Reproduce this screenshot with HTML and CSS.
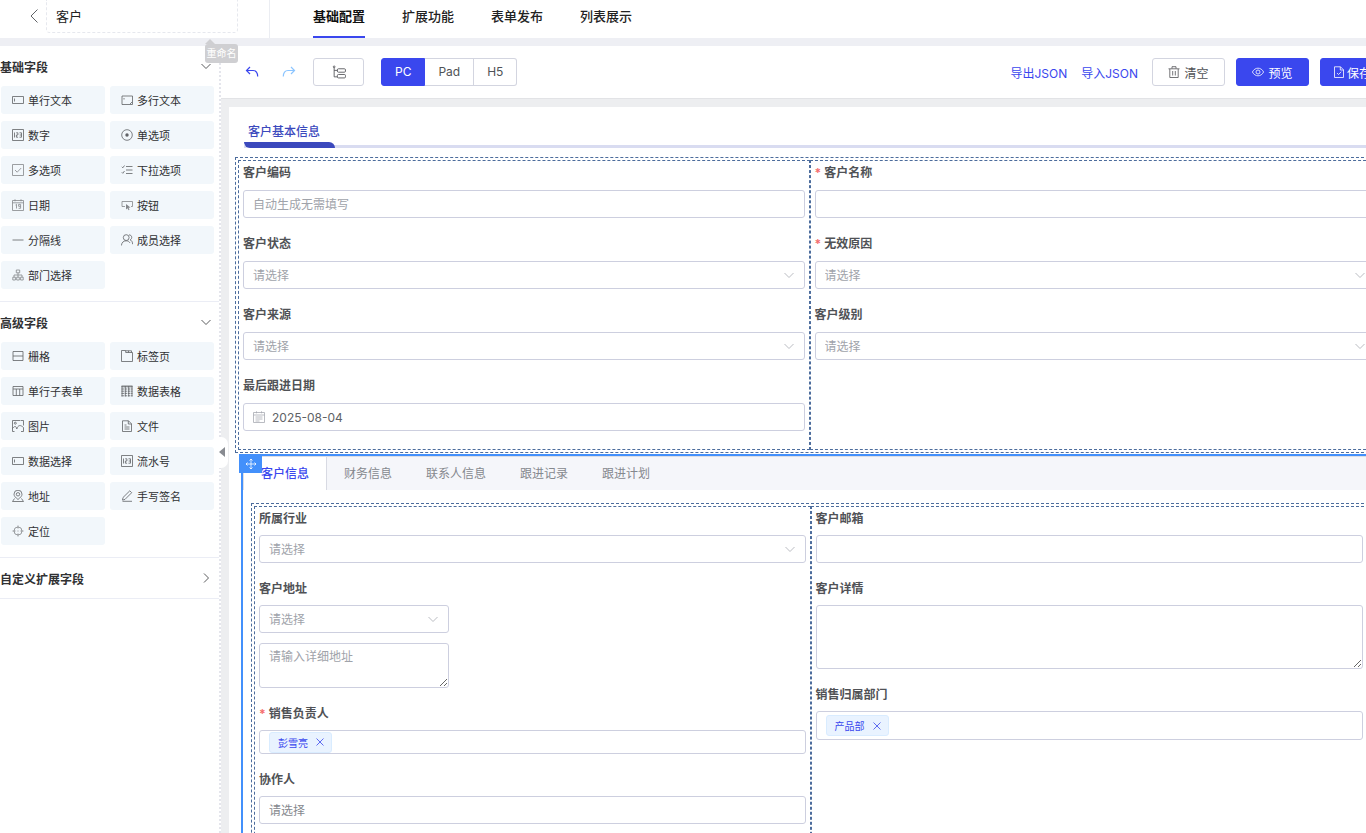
FILE: index.html
```html
<!DOCTYPE html>
<html lang="zh-CN">
<head>
    <meta charset="UTF-8">
    <meta name="viewport" content="width=device-width, initial-scale=1.0">
    <title>客户 - 基础配置</title>
    <link rel="stylesheet" href="styles.css">
</head>
<body>
    <svg class="sprite" aria-hidden="true">
        <symbol id="i-down" viewBox="0 0 12 12"><path d="M1.5 4L6 8.5L10.5 4"/></symbol>
        <symbol id="i-right" viewBox="0 0 12 12"><path d="M4 1.5L8.5 6L4 10.5"/></symbol>
        <symbol id="i-close" viewBox="0 0 12 12"><path d="M2.5 2.5L9.5 9.5M9.5 2.5L2.5 9.5"/></symbol>
        <symbol id="i-input" viewBox="0 0 12 12"><path d="M.5 2.5h11v7H.5zM2.5 4.5v3"/></symbol>
        <symbol id="i-num" viewBox="0 0 12 12"><path d="M.5.5h11v11H.5zM2.500 3.500v5M4.200 3.800h1.700v2.200H4.400v2.200h1.700M7.500 3.800h2v4.400h-2M7.700 6h1.800"/></symbol>
    </svg>
    <div class="app">
        <header class="header">
            <div class="header-left">
                <button class="back" aria-label="返回"><svg viewBox="0 0 12 16"><path d="M9.500 1.500L3 8L9.500 14.500"/></svg></button>
                <input class="form-name" type="text" value="客户" aria-label="表单名称">
                <span class="tooltip">重命名</span>
            </div>
            <nav class="nav">
                <a class="active" href="#">基础配置</a>
                <a href="#">扩展功能</a>
                <a href="#">表单发布</a>
                <a href="#">列表展示</a>
            </nav>
        </header>

        <div class="body">
            <aside class="sidebar">
                <section class="group">
                    <h2>基础字段 <svg class="icon"><use href="#i-down"/></svg></h2>
                    <div class="palette">
                        <button><svg class="icon"><use href="#i-input"/></svg>单行文本</button>
                        <button><svg class="icon" viewBox="0 0 12 12"><path d="M1 2h10.500v8.500H1zM3 4v1.500M9 10l2-2"/></svg>多行文本</button>
                        <button><svg class="icon"><use href="#i-num"/></svg>数字</button>
                        <button><svg class="icon" viewBox="0 0 12 12"><circle cx="6" cy="6" r="5.300"/><circle class="solid" cx="6" cy="6" r="1.700"/></svg>单选项</button>
                        <button><svg class="icon light" viewBox="0 0 12 12"><path d="M.5.5h11v11H.5zM3 6l2.200 2.200L9.200 4"/></svg>多选项</button>
                        <button><svg class="icon" viewBox="0 0 12 12"><path d="M.8 2.800l1 1L3.500 1.500M.8 8.300l1 1L3.500 7M5 2.500h6.500M5 6h6.500M5 9.500h6.500"/></svg>下拉选项</button>
                        <button><svg class="icon light" viewBox="0 0 12 12"><path d="M.5 1.500h11v10H.5zM.5 3.800h11M3 .3v2M9 .3v2M3.500 6l1-.7v4.200M8.500 7.300H6.600V5.400h2v3.900H6.600"/></svg>日期</button>
                        <button><svg class="icon light" viewBox="0 0 12 12"><path d="M4 7.500H1v-5h10.500v5H10"/><path class="solid" d="M5 5l4.500 3.500-2 .3 1 2-1 .4-.9-2L5 10.500z"/></svg>按钮</button>
                        <button><svg class="icon" viewBox="0 0 12 12"><path d="M.5 6h11"/></svg>分隔线</button>
                        <button><svg class="icon" viewBox="0 0 12 12"><circle cx="5.200" cy="3.600" r="2.900"/><path d="M.4 11.500c.3-3 2-4.700 4.800-4.700 1.800 0 3 .8 3.700 2M8 .9c2.900-.2 3.800 3.600 1.200 5 1.700.7 2.400 2.300 2.400 4.300"/></svg>成员选择</button>
                        <button><svg class="icon light" viewBox="0 0 12 12"><path d="M4.300 1h3.400v2.800H4.300zM.8 8.200h2.600V11H.8zM4.700 8.200h2.600V11H4.700zM8.600 8.200h2.600V11H8.600zM6 3.800v4.400M2 8.200V6h8v2.200"/></svg>部门选择</button>
                    </div>
                </section>
                <section class="group">
                    <h2>高级字段 <svg class="icon"><use href="#i-down"/></svg></h2>
                    <div class="palette">
                        <button><svg class="icon" viewBox="0 0 12 12"><path d="M1 1.500h10v9H1zM1 6h10"/></svg>栅格</button>
                        <button><svg class="icon" viewBox="0 0 12 12"><path d="M.5 11.500V.5h4.200v2h6.800v9zM4.700.8h5.800v1.700M7.500.8v1.700"/></svg>标签页</button>
                        <button><svg class="icon" viewBox="0 0 12 12"><path d="M1 1.500h10v9H1zM1 4h10M4.300 4v6.500M7.700 4v6.500"/></svg>单行子表单</button>
                        <button><svg class="icon" viewBox="0 0 12 12"><path d="M.5 1h11M.5 1.800h11"/><path stroke-dasharray="2.500 .700" d="M.5 4h11M.5 6.200h11M.5 8.400h11M.5 10.800h11"/><path d="M1 1v10.500M4.300 1v10.500M7.700 1v10.500M11 1v10.500"/></svg>数据表格</button>
                        <button><svg class="icon" viewBox="0 0 12 12"><path d="M8.500.5H.5v11h2M9 .5h2.500v5M.5 8.500C3 5.500 4 6 4.800 9c1.200-4 3.500-4.500 6.700-1.500v4H9"/><circle cx="3.300" cy="3.200" r="1"/></svg>图片</button>
                        <button><svg class="icon" viewBox="0 0 12 12"><path d="M1.500.8h6l3 3v7.700h-9zM7.300.8v3.200h3.200M3.500 5h2M3.500 7h5M3.500 9h5"/></svg>文件</button>
                        <button><svg class="icon"><use href="#i-input"/></svg>数据选择</button>
                        <button><svg class="icon"><use href="#i-num"/></svg>流水号</button>
                        <button><svg class="icon" viewBox="0 0 12 12"><path d="M6 9.500C3.500 7.500 2 6 2 4.200a4 4 0 0 1 8 0C10 6 8.500 7.500 6 9.500zM2.500 8.500L.5 11.500h11l-2-3"/><circle cx="6" cy="4.300" r="1.700"/></svg>地址</button>
                        <button><svg class="icon" viewBox="0 0 12 12"><path d="M2 7.500L8.800.8l1.900 1.900L4 9.400l-2.500.7zM1.500 11.300H11"/></svg>手写签名</button>
                        <button><svg class="icon light" viewBox="0 0 12 12"><circle cx="6" cy="6" r="4"/><path d="M6 .5v3M6 8.500v3M.5 6h3M8.500 6h3M5.500 6h1"/></svg>定位</button>
                    </div>
                </section>
                <section class="group closed">
                    <h2>自定义扩展字段 <svg class="icon"><use href="#i-right"/></svg></h2>
                </section>
                <button class="collapse" aria-label="收起"></button>
            </aside>

            <main class="main">
                <div class="toolbar">
                    <button class="tool undo" aria-label="撤销"><svg viewBox="0 0 14 12"><path d="M5 1L1.500 4.500L5 8M1.500 4.500H8c3 0 4.700 2.200 4.700 6"/></svg></button>
                    <button class="tool redo" aria-label="重做"><svg viewBox="0 0 14 12"><path d="M9 1l3.500 3.500L9 8M12.500 4.500H6c-3 0-4.700 2.200-4.700 6"/></svg></button>
                    <button class="btn tree" aria-label="大纲"><svg class="icon" viewBox="0 0 13 12"><path d="M2 2v8.500h3M2 4.500h3"/><circle cx="2" cy="1.200" r=".8"/><rect x="5" y="3" width="7.500" height="3.200" rx="1"/><rect x="5" y="8.300" width="7.500" height="3.200" rx="1"/></svg></button>
                    <div class="devices">
                        <label><input type="radio" name="device" checked><span>PC</span></label>
                        <label><input type="radio" name="device"><span>Pad</span></label>
                        <label><input type="radio" name="device"><span>H5</span></label>
                    </div>
                    <div class="actions">
                        <button class="link">导出JSON</button>
                        <button class="link">导入JSON</button>
                        <button class="btn"><svg class="icon" viewBox="0 0 12 12"><path d="M.5 2.800h11M4 2.500V.7h4v1.800M1.800 3v8.500h8.400V3M4.700 5v4.500M7.300 5v4.500"/></svg>清空</button>
                        <button class="btn primary"><svg class="icon" viewBox="0 0 12 12"><path d="M.4 6C3 .9 9 .9 11.600 6 9 11.100 3 11.100.4 6z"/><circle cx="6" cy="6" r="2"/></svg>预览</button>
                        <button class="btn primary save"><svg class="icon" viewBox="0 0 12 12"><path d="M1.500.8h6l3 3v7.700h-9zM7.300.8v3.200h3.200M4 7l1.500 1.500L8.300 5.800"/></svg>保存</button>
                    </div>
                </div>

                <div class="canvas">
                    <div class="title-bar"><h3>客户基本信息</h3></div>

                    <div class="grid">
                        <div class="col">
                            <div class="field">
                                <label for="code">客户编码</label>
                                <input id="code" type="text" placeholder="自动生成无需填写">
                            </div>
                            <div class="field">
                                <label for="status">客户状态</label>
                                <div class="select"><select id="status"><option>请选择</option></select><svg class="icon"><use href="#i-down"/></svg></div>
                            </div>
                            <div class="field">
                                <label for="source">客户来源</label>
                                <div class="select"><select id="source"><option>请选择</option></select><svg class="icon"><use href="#i-down"/></svg></div>
                            </div>
                            <div class="field">
                                <label for="date">最后跟进日期</label>
                                <div class="date">
                                    <svg class="icon" viewBox="0 0 12 12"><path d="M.5 1.500h11v10H.5zM.5 4h11M3.500.3v2M8.500.3v2M2.500 6h7M2.500 8h7M2.500 10h4"/></svg>
                                    <input id="date" type="text" value="2025-08-04">
                                </div>
                            </div>
                        </div>
                        <div class="col">
                            <div class="field required">
                                <label for="name">客户名称</label>
                                <input id="name" type="text">
                            </div>
                            <div class="field required">
                                <label for="reason">无效原因</label>
                                <div class="select"><select id="reason"><option>请选择</option></select><svg class="icon"><use href="#i-down"/></svg></div>
                            </div>
                            <div class="field">
                                <label for="level">客户级别</label>
                                <div class="select"><select id="level"><option>请选择</option></select><svg class="icon"><use href="#i-down"/></svg></div>
                            </div>
                        </div>
                    </div>

                    <div class="tabs">
                        <span class="drag"><svg class="icon" viewBox="0 0 12 12"><path d="M6 1v10M1 6h10M4.500 2.500L6 1l1.500 1.500M4.500 9.500L6 11l1.500-1.500M2.500 4.500L1 6l1.500 1.500M9.500 4.500L11 6 9.500 7.500"/></svg></span>
                        <div class="tab-head" role="tablist">
                            <button class="active" role="tab">客户信息</button>
                            <button role="tab">财务信息</button>
                            <button role="tab">联系人信息</button>
                            <button role="tab">跟进记录</button>
                            <button role="tab">跟进计划</button>
                        </div>
                        <div class="grid inner">
                            <div class="col">
                                <div class="field">
                                    <label for="industry">所属行业</label>
                                    <div class="select"><select id="industry"><option>请选择</option></select><svg class="icon"><use href="#i-down"/></svg></div>
                                </div>
                                <div class="field address">
                                    <label for="area">客户地址</label>
                                    <div class="select"><select id="area"><option>请选择</option></select><svg class="icon"><use href="#i-down"/></svg></div>
                                    <textarea placeholder="请输入详细地址" aria-label="详细地址"></textarea>
                                </div>
                                <div class="field required">
                                    <label for="owner">销售负责人</label>
                                    <div class="tag-box small">
                                        <span class="tag">彭雪亮<button id="owner" aria-label="移除彭雪亮"><svg class="icon"><use href="#i-close"/></svg></button></span>
                                    </div>
                                </div>
                                <div class="field">
                                    <label for="helper">协作人</label>
                                    <input id="helper" class="dark" type="text" placeholder="请选择">
                                </div>
                            </div>
                            <div class="col">
                                <div class="field">
                                    <label for="mail">客户邮箱</label>
                                    <input id="mail" type="text">
                                </div>
                                <div class="field">
                                    <label for="detail">客户详情</label>
                                    <textarea id="detail" class="tall"></textarea>
                                </div>
                                <div class="field">
                                    <label for="dept">销售归属部门</label>
                                    <div class="tag-box">
                                        <span class="tag">产品部<button id="dept" aria-label="移除产品部"><svg class="icon"><use href="#i-close"/></svg></button></span>
                                    </div>
                                </div>
                            </div>
                        </div>
                    </div>
                </div>
            </main>
        </div>
    </div>
</body>
</html>
```
FILE: styles.css
```css
* {
    box-sizing: border-box;
}

body {
    margin: 0;
    height: 100vh;
    overflow: hidden;
    background: #eeeff4;
    color: #303133;
    font-family: Inter, "Noto Sans CJK SC", sans-serif;
    font-size: 12px;
}

button, input, select, textarea {
    margin: 0;
    font: inherit;
    color: inherit;
}

button {
    padding: 0;
    border: none;
    background: none;
    cursor: pointer;
}

svg {
    fill: none;
    stroke: currentColor;
    stroke-width: 1;
}

.sprite {
    display: none;
}

.icon {
    flex: none;
    width: 12px;
    height: 12px;
    stroke-width: 0.8;
}

.light {
    opacity: 0.75;
}

.solid {
    fill: currentColor;
    stroke: none;
}

/* the designer is a little wider than the window */
.app {
    display: flex;
    flex-direction: column;
    gap: 8px;
    height: 100vh;
    margin-right: -32px;
}

/* header */
.header {
    display: flex;
    height: 38px;
    background: #fff;
    font-size: 13px;
}

.header-left {
    position: relative;
    display: flex;
    width: 270px;
    padding-left: 28px;
    border-right: 1px solid #ebedf2;
}

.back {
    width: 18px;
    height: 30px;
    text-align: left;
}

.back svg {
    width: 12px;
    height: 16px;
    vertical-align: middle;
    color: #606266;
}

.form-name {
    width: 192px;
    height: 33px;
    padding: 0 9px 2px;
    border: 1px dashed #e6e8ee;
    border-top: none;
    border-radius: 0 0 4px 4px;
    outline: none;
    color: #222;
}

.tooltip {
    position: absolute;
    top: 44px;
    left: 205px;
    z-index: 5;
    width: 33px;
    border-radius: 3px;
    background: #cfcfd2;
    color: #fff;
    font-size: 10px;
    line-height: 19px;
    text-align: center;
}

.tooltip::before {
    content: "";
    position: absolute;
    top: -5px;
    left: 0;
    border: 5px solid transparent;
    border-top: none;
    border-bottom-color: #cfcfd2;
}

.nav {
    display: flex;
    gap: 37px;
    padding-left: 43px;
}

.nav a {
    padding-bottom: 4px;
    border-bottom: 2px solid transparent;
    color: #222;
    font-weight: 500;
    line-height: 32px;
    text-decoration: none;
}

.nav .active {
    border-color: #3a47ee;
    color: #111;
    font-weight: 700;
}

.body {
    flex: 1;
    display: flex;
    min-height: 0;
}

/* field palette */
.sidebar {
    position: relative;
    flex: none;
    width: 221px;
    border-right: 2px dotted #e4e5ec;
    background: #fff;
}

.group {
    padding-bottom: 12px;
    border-bottom: 1px solid #ebedf5;
}

.group h2 {
    display: flex;
    align-items: center;
    justify-content: space-between;
    height: 40px;
    margin: 0;
    padding-right: 7px;
    font-size: 12px;
    font-weight: 700;
}

.group.closed {
    padding: 0;
}

.palette {
    display: grid;
    grid-template-columns: 104px 104px;
    gap: 7px 5px;
    padding-left: 1px;
}

.palette button {
    display: flex;
    align-items: center;
    gap: 4px;
    height: 28px;
    padding-left: 11px;
    border-radius: 3px;
    background: #f2f7fb;
    font-size: 11px;
}

.palette .icon {
    color: #606266;
}

.collapse {
    position: absolute;
    top: 391px;
    right: -9px;
    width: 11px;
    height: 31px;
    border-radius: 0 7px 7px 0;
    background: #fff;
}

.collapse::before {
    content: "";
    position: absolute;
    top: 10px;
    left: 2px;
    border: 5px solid transparent;
    border-left: none;
    border-right: 6px solid #888b91;
}

/* toolbar */
.main {
    flex: 1;
    display: flex;
    flex-direction: column;
    min-width: 0;
    background: #edeef0;
}

.toolbar {
    flex: none;
    display: flex;
    align-items: center;
    height: 53px;
    padding: 0 14px 0 24px;
    border-bottom: 1px solid #e2e3e6;
    background: #fff;
}

.tool {
    width: 14px;
    height: 14px;
    color: #3a47ee;
}

.tool svg {
    display: block;
    width: 14px;
    height: 12px;
    stroke-width: 1.2;
}

.redo {
    margin: 0 17px 0 23px;
    color: #8cc5ff;
}

.btn {
    display: flex;
    align-items: center;
    justify-content: center;
    gap: 4px;
    width: 73px;
    height: 28px;
    border: 1px solid #d3d5e0;
    border-radius: 3px;
    background: #fff;
    color: #505256;
}

.tree {
    width: 51px;
}

.tree .icon {
    width: 14px;
    height: 14px;
}

.primary {
    border-color: #3a47ee;
    background: #3a47ee;
    color: #fff;
}

.save {
    width: 64px;
    gap: 2px;
}

.devices {
    display: flex;
    margin-left: 17px;
}

.devices label {
    position: relative;
}

.devices input {
    position: absolute;
    opacity: 0;
}

.devices span {
    display: block;
    padding: 0 13px;
    border: 1px solid #d3d5e0;
    border-left: none;
    background: #fff;
    line-height: 26px;
    color: #505256;
}

.devices label:first-child span {
    border-left: 1px solid #d3d5e0;
    border-radius: 3px 0 0 3px;
}

.devices label:last-child span {
    border-radius: 0 3px 3px 0;
}

.devices input:checked + span {
    border-color: #3a47ee;
    background: #3a47ee;
    color: #fff;
}

.actions {
    display: flex;
    align-items: center;
    gap: 11px;
    margin-left: auto;
}

.link {
    margin-right: 3px;
    color: #3a47ee;
}

/* canvas */
.canvas {
    flex: 1;
    margin: 8px 8px 0;
    padding: 15px 6px 0;
    overflow: hidden;
    background: #fff;
}

.title-bar {
    margin: 0 0 9px 9px;
    border-bottom: 3px solid #d9dcf1;
}

.title-bar h3 {
    width: 91px;
    margin: 0 0 -3px;
    color: #3b49bd;
    font-size: 12px;
    font-weight: 500;
    line-height: 20px;
    text-indent: 4px;
}

.title-bar h3::after {
    content: "";
    display: block;
    height: 6px;
    border-radius: 0 8px 0 8px;
    background: #3b49bd;
}

.grid {
    display: grid;
    grid-template-columns: 1fr 1fr;
    padding: 2px;
    border: 1px dashed #4c6c9c;
}

.col {
    padding: 2px 4px;
    border: 1px dashed #4c6c9c;
}

.field {
    display: flex;
    flex-direction: column;
    gap: 7px;
    margin-bottom: 16px;
}

.inner .field {
    gap: 6px;
}

.field > label {
    color: #505256;
    font-weight: 700;
    line-height: 20px;
}

.required > label::before {
    content: "*";
    margin-right: 3px;
    color: #f56c6c;
}

.field input, .field select, .field textarea, .tag-box {
    display: block;
    width: 100%;
    height: 28px;
    padding: 0 9px;
    border: 1px solid #cdcfdf;
    border-radius: 3px;
    outline: none;
    background: #fff;
}

.field select {
    appearance: none;
    color: #a0a3aa;
}

.field textarea {
    height: 45px;
    padding: 4px 9px;
    line-height: 18px;
}

.field .tall {
    height: 64px;
}

.field ::placeholder {
    color: #a0a3aa;
    opacity: 1;
}

.field .dark::placeholder {
    color: #85888e;
}

.select, .date {
    position: relative;
}

.select .icon {
    position: absolute;
    top: 8px;
    right: 10px;
    color: #a8abb2;
    pointer-events: none;
}

.date .icon {
    position: absolute;
    top: 8px;
    left: 10px;
    color: #a8abb2;
}

.field .date input {
    padding-left: 28px;
    color: #606266;
}

.address > .select, .address > textarea {
    width: 190px;
}

.address > textarea {
    margin-top: 4px;
}

.tag-box {
    display: flex;
    align-items: center;
    height: 29px;
}

.tag-box.small {
    height: 24px;
}

.tag {
    display: flex;
    align-items: center;
    gap: 6px;
    height: 21px;
    padding: 0 5px 0 8px;
    border: 1px solid #d9ecff;
    border-radius: 3px;
    background: #e9f3ff;
    color: #3a47ee;
    font-size: 10px;
}

.tag button {
    display: flex;
}

/* selected tabs widget */
.tabs {
    position: relative;
    margin: 1px 6px 0;
    border: 2px solid #4390fb;
    border-bottom: none;
}

.drag {
    position: absolute;
    top: -2px;
    left: -4px;
    display: flex;
    align-items: center;
    justify-content: center;
    width: 23px;
    height: 19px;
    background: #4390fb;
    color: #fff;
}

.tab-head {
    display: flex;
    height: 34px;
    border-top: 1px solid #dcdfe6;
    border-left: 1px solid #dcdfe6;
    background: #f5f6fa;
}

.tab-head button {
    padding: 0 17px 2px;
    color: #85888e;
}

.tab-head .active {
    border-right: 1px solid #d8dae3;
    background: #fff;
    color: #3a47ee;
    font-weight: 500;
}

.tabs .inner {
    height: 400px;
    margin: 13px 2px 0 8px;
    padding-right: 6px;
}

.inner .col:last-child {
    padding-right: 6px;
    margin-right: -2px;
    border-right: none;
}
```
